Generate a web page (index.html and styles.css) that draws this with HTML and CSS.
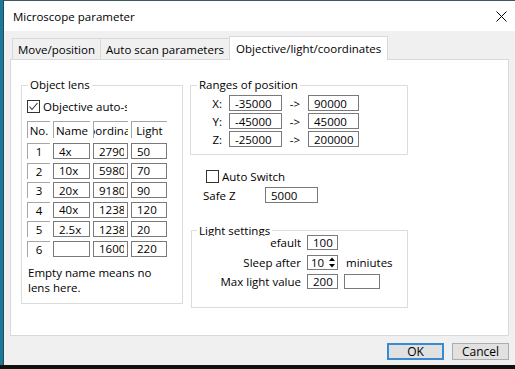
FILE: index.html
```html
<!DOCTYPE html>
<html lang="en">
<head>
    <meta charset="UTF-8">
    <title>Microscope parameter</title>
    <link rel="stylesheet" href="styles.css">
</head>
<body>
    <div class="screen">
        <div class="window">
            <div class="titlebar">
                <span class="title">Microscope parameter</span>
                <svg class="close" width="11" height="11" viewBox="0 0 11 11">
                    <path d="M0.5 0.5 L10.5 10.5 M10.5 0.5 L0.5 10.5" stroke="#000" stroke-width="1" fill="none"/>
                </svg>
            </div>

            <div class="tabs">
                <div class="tab">Move/position</div>
                <div class="tab">Auto scan parameters</div>
                <div class="tab active">Objective/light/coordinates</div>
            </div>

            <div class="panel">
                <!-- Objective table -->
                <fieldset class="group lens">
                    <legend>Object lens</legend>
                    <div class="check-row">
                        <span class="checkbox">
                            <svg width="11" height="11" viewBox="0 0 11 11"><polyline points="1.5,5.5 4,8.5 9.5,2" stroke="#333" stroke-width="1.1" fill="none"/></svg>
                        </span>
                        <span class="clip">Objective auto-switch</span>
                    </div>

                    <div class="lens-table">
                        <div class="head">No.</div>
                        <div class="head">Name</div>
                        <div class="head">Coordinate</div>
                        <div class="head">Light</div>

                        <div class="num">1</div><input class="field" value="4x"><input class="field" value="2790"><input class="field" value="50">
                        <div class="num">2</div><input class="field" value="10x"><input class="field" value="5980"><input class="field" value="70">
                        <div class="num">3</div><input class="field" value="20x"><input class="field" value="9180"><input class="field" value="90">
                        <div class="num">4</div><input class="field" value="40x"><input class="field" value="123850"><input class="field" value="120">
                        <div class="num">5</div><input class="field" value="2.5x"><input class="field" value="123850"><input class="field" value="20">
                        <div class="num">6</div><input class="field" value=""><input class="field" value="160000"><input class="field" value="220">
                    </div>

                    <p class="note">Empty name means no<br>lens here.</p>
                </fieldset>

                <div class="right">
                    <fieldset class="group ranges">
                        <legend>Ranges of position</legend>
                        <div class="range-grid">
                            <span class="axis">X:</span><input class="field" value="-35000"><span class="arrow">-&gt;</span><input class="field" value="90000">
                            <span class="axis">Y:</span><input class="field" value="-45000"><span class="arrow">-&gt;</span><input class="field" value="45000">
                            <span class="axis">Z:</span><input class="field" value="-25000"><span class="arrow">-&gt;</span><input class="field" value="200000">
                        </div>
                    </fieldset>

                    <div class="check-row switch">
                        <span class="checkbox"></span>
                        <span>Auto Switch</span>
                    </div>

                    <div class="safe-row">
                        <span class="safe-label">Safe Z</span>
                        <input class="field safe" value="5000">
                    </div>

                    <fieldset class="group light">
                        <legend>Light settings</legend>
                        <div class="light-grid">
                            <span class="label cut">Default</span>
                            <input class="field" value="100">
                            <span></span>

                            <span class="label">Sleep after</span>
                            <div class="spin">
                                <span>10</span>
                                <svg width="8" height="13" viewBox="0 0 8 13">
                                    <polygon points="1,5 7,5 4,1.5" fill="#000"/>
                                    <polygon points="1,8 7,8 4,11.5" fill="#000"/>
                                </svg>
                            </div>
                            <span class="unit">miniutes</span>

                            <span class="label">Max light value</span>
                            <input class="field" value="200">
                            <input class="field extra" value="">
                        </div>
                    </fieldset>
                </div>
            </div>

            <div class="actions">
                <button class="btn default">OK</button>
                <button class="btn">Cancel</button>
            </div>
        </div>
    </div>
</body>
</html>
```

FILE: styles.css
```css
* {
    box-sizing: border-box;
}

body {
    margin: 0;
    width: 515px;
    height: 369px;
    overflow: hidden;
    background-color: #111;
    font-family: "Open Sans", "Noto Sans", sans-serif;
    font-size: 11.5px;
    color: #000;
}

.screen {
    display: flex;
    height: 365px;
    padding-left: 3px;
    background-color: #18799a;
}

.window {
    flex: 1;
    display: flex;
    flex-direction: column;
    background-color: #f0f0f0;
    border-left: 1px solid #2f4650;
    border-top: 1px solid #3d5a64;
}

.titlebar {
    height: 30px;
    display: flex;
    align-items: center;
    justify-content: space-between;
    padding: 0 8px 0 9px;
    background-color: #fff;
}

.title {
    font-size: 11.5px;
}

/* Tabs */
.tabs {
    height: 28px;
    display: flex;
    align-items: flex-end;
    padding-left: 9px;
}

.tab {
    height: 21px;
    display: flex;
    align-items: center;
    padding: 0 5px;
    border: 1px solid #d9d9d9;
    border-bottom: none;
    margin-left: -1px;
    background-color: #f0f0f0;
}

.tab.active {
    height: 24px;
    margin-bottom: -1px;
    padding: 0 6px 1px;
    background-color: #fff;
    position: relative;
    z-index: 1;
}

.panel {
    height: 277px;
    margin: 0 6px;
    padding: 18px 0 0 10px;
    display: grid;
    grid-template-columns: 162px 219px;
    column-gap: 7px;
    align-items: start;
    background-color: #fff;
    border: 1px solid #d9d9d9;
}

/* Group boxes */
.group {
    margin: 0;
    padding: 0;
    min-width: 0;
    border: 1px solid #dcdcdc;
}

.group legend {
    padding: 0 2px;
    line-height: 14px;
}

.lens {
    padding: 0 0 8px 5px;
}

.lens legend {
    margin-left: 1px;
}

.check-row {
    display: flex;
    align-items: center;
    gap: 3px;
    height: 13px;
    margin-top: 8px;
}

.checkbox {
    width: 13px;
    height: 13px;
    border: 1px solid #333;
    background-color: #fff;
    display: flex;
}

.clip {
    width: 84px;
    overflow: hidden;
    white-space: nowrap;
}

.lens-table {
    margin-top: 8px;
    display: grid;
    grid-template-columns: 23px 37px 35px 36px;
    grid-template-rows: 18.5px repeat(6, 16px);
    column-gap: 3px;
    row-gap: 3.5px;
    align-items: start;
}

.head,
.num {
    display: flex;
    align-items: center;
    justify-content: center;
    overflow: hidden;
    white-space: nowrap;
    border-top: 1px solid #a6a6a6;
    border-left: 1px solid #a6a6a6;
}

.head {
    height: 17px;
}

.num {
    height: 16px;
}

.field {
    display: block;
    width: 100%;
    height: 16px;
    margin: 0;
    padding: 0 3px 0 5px;
    border: 1px solid #7a7a7a;
    background-color: #fff;
    font: inherit;
    color: #000;
    outline: none;
}

.note {
    margin: 8px 0 0 1px;
    line-height: 15px;
}

/* Right column */
.right {
    display: flex;
    flex-direction: column;
    align-items: flex-start;
}

.ranges {
    width: 218px;
    padding: 3px 0 7px;
}

.ranges legend {
    margin-left: 6px;
}

.range-grid {
    display: grid;
    grid-template-columns: 38px 53px 26px 51px;
    grid-auto-rows: 16px;
    row-gap: 2px;
    align-items: center;
}

.axis {
    text-align: right;
    padding-right: 7px;
}

.arrow {
    text-align: center;
}

.switch {
    margin: 15px 0 0 16px;
}

.safe-row {
    display: flex;
    align-items: center;
    margin: 4px 0 0 13px;
}

.safe-label {
    width: 62px;
}

.field.safe {
    width: 53px;
}

.light {
    width: 217px;
    margin-left: 1px;
    margin-top: 21px;
    padding: 0 0 18px;
}

.light legend {
    margin-left: 5px;
    height: 12px;
    overflow: hidden;
}

.light-grid {
    margin-top: -1px;
    display: grid;
    grid-template-columns: 109px 31px auto;
    grid-auto-rows: 15px;
    column-gap: 6px;
    row-gap: 4.5px;
    align-items: center;
}

.light-grid .field {
    height: 15px;
}

.label {
    display: flex;
    justify-content: flex-end;
    white-space: nowrap;
}

.label.cut {
    width: 31px;
    justify-self: end;
    overflow: hidden;
}

.spin {
    height: 15px;
    display: flex;
    align-items: center;
    justify-content: space-between;
    padding: 0 1px 0 3px;
    border: 1px solid #7a7a7a;
}

.unit {
    padding-left: 2px;
}

.field.extra {
    width: 36px;
}

/* Dialog buttons */
.actions {
    display: flex;
    justify-content: flex-end;
    gap: 8px;
    padding: 7px 6px 0 0;
}

.btn {
    width: 57px;
    height: 17px;
    padding: 0;
    font: inherit;
    font-size: 12px;
    line-height: 13px;
    color: #000;
    background-color: #e1e1e1;
    border: 1px solid #adadad;
}

.btn.default {
    border: 2px solid #3a8ad3;
}
```
